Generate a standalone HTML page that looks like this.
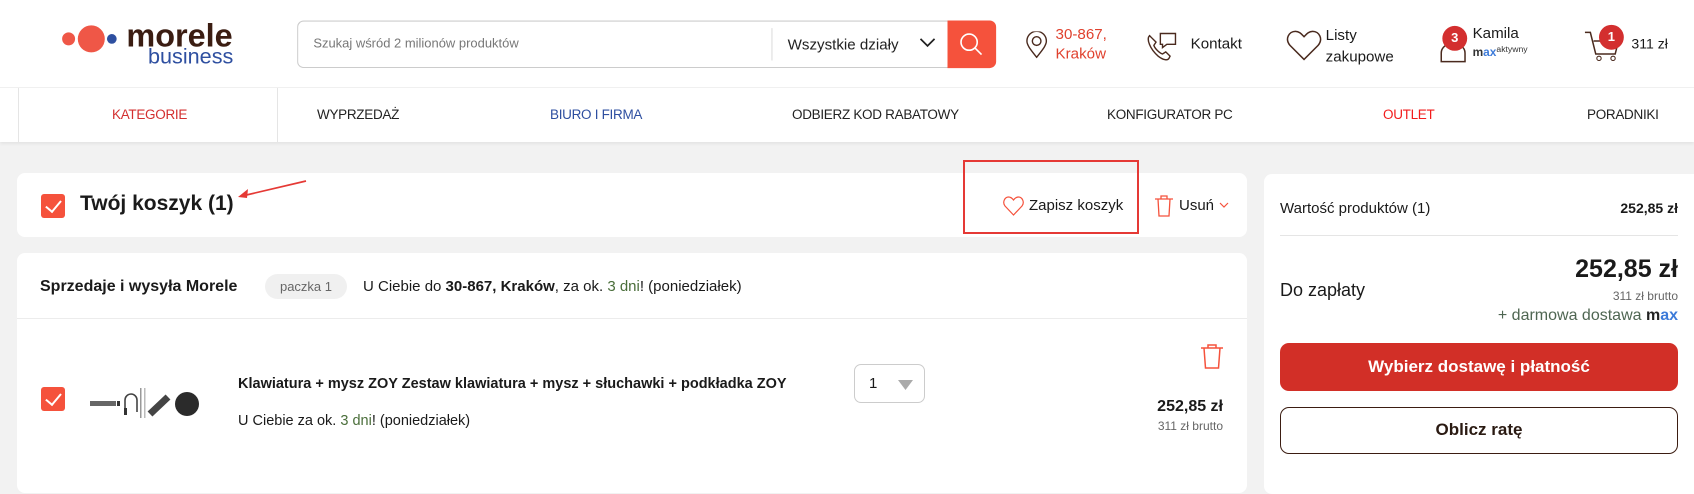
<!DOCTYPE html>
<html><head><meta charset="utf-8"><style>
*{margin:0;padding:0;box-sizing:border-box}
body{width:1694px;height:471px;overflow:hidden;background:#f2f2f2;font-family:"Liberation Sans",sans-serif;color:#1a1a1a;position:relative}
#w{position:absolute;left:0;top:0;width:1568px;height:81.5px;transform:scale(1.0804);transform-origin:0 0}
.a{position:absolute;white-space:nowrap}
.hdr{position:absolute;left:0;top:0;width:1568px;height:81.5px;background:#fff;border-bottom:1px solid #e2e2e2}
.nav{position:absolute;left:0;top:88px;width:1694px;height:54px;background:#fff;box-shadow:0 2px 3px rgba(0,0,0,.06)}
.nav span{position:absolute;top:19px;font-size:13.5px;letter-spacing:-.3px;color:#222}
.card{position:absolute;background:#fff;border-radius:8px}
.cb{position:absolute;width:24px;height:24px;background:#f5523c;border-radius:3px}
.cb:after{content:"";position:absolute;left:8px;top:3px;width:7px;height:13px;border:solid #fff;border-width:0 2px 2px 0;transform:rotate(40deg)}
.badge{position:absolute;width:23px;height:23px;border-radius:50%;background:#d32f2f;color:#fff;font-size:12px;font-weight:bold;text-align:center;line-height:23px}
</style></head><body><div id="w">
<div class="hdr">
 <svg class="a" style="left:50px;top:22px" width="60" height="28"><circle cx="13.5" cy="14" r="6" fill="#ef5747"/><circle cx="34.5" cy="14" r="12.5" fill="#ef5747"/><circle cx="53.5" cy="14" r="4.5" fill="#2e4fa0"/></svg>
 <div class="a" style="left:117px;top:17px;font-size:30px;font-weight:bold;color:#3b1d12">morele</div>
 <div class="a" style="left:137px;top:42px;font-size:20px;color:#2e4fa0">business</div>
 <div class="a" style="left:275px;top:18.5px;width:602px;height:44.5px;border:1px solid #ccc;border-right:none;border-radius:6px 0 0 6px"></div>
 <div class="a" style="left:290px;top:33px;font-size:12px;color:#777">Szukaj wśród 2 milionów produktów</div>
 <div class="a" style="left:714px;top:26px;width:1px;height:30px;background:#ddd"></div>
 <div class="a" style="left:729px;top:33px;font-size:14px;color:#222">Wszystkie działy</div>
 <svg class="a" style="left:851px;top:35px" width="15" height="9"><path d="M1 1l6.5 6.5L14 1" fill="none" stroke="#222" stroke-width="1.6"/></svg>
 <div class="a" style="left:877px;top:18.5px;width:44.5px;height:44.5px;background:#f5523c;border-radius:0 6px 6px 0"></div>
 <svg class="a" style="left:887px;top:29px" width="24" height="24"><circle cx="10" cy="10" r="7.5" fill="none" stroke="#fff" stroke-width="1.5"/><path d="M15.5 15.5l6 6" stroke="#fff" stroke-width="1.5"/></svg>
 <svg class="a" style="left:949px;top:29px" width="21" height="25"><path d="M10.5 24C5 17 1.5 13 1.5 9a9 9 0 0 1 18 0c0 4-3.5 8-9 15z" fill="none" stroke="#4a2a1e" stroke-width="1.3"/><circle cx="10.5" cy="9" r="4" fill="none" stroke="#4a2a1e" stroke-width="1.3"/></svg>
 <div class="a" style="left:977px;top:22px;font-size:14px;line-height:18px;color:#e0412e">30-867,<br>Kraków</div>
 <svg class="a" style="left:1060px;top:25px" width="32" height="32"><path d="M4 8c-3 3 0 12 8 19 5 4 9 4 10 2l1-2-4-4-3 2c-3-1-7-5-8-8l2-3-4-4z" fill="none" stroke="#4a2a1e" stroke-width="1.3"/><path d="M14 6h14v10h-8l-4 3v-3h-2z" fill="none" stroke="#4a2a1e" stroke-width="1.3"/></svg>
 <div class="a" style="left:1102px;top:32px;font-size:14px">Kontakt</div>
 <svg class="a" style="left:1190px;top:27px" width="34" height="30"><path d="M17 28L4 15C-1 9 3 2 9 2c4 0 6 3 8 5 2-2 4-5 8-5 6 0 10 7 5 13z" fill="none" stroke="#4a2a1e" stroke-width="1.4"/></svg>
 <div class="a" style="left:1227px;top:22px;font-size:14px;line-height:20px">Listy<br>zakupowe</div>
 <svg class="a" style="left:1332px;top:37px" width="26" height="22"><path d="M2 20v-8a11 9 0 0 1 22 0v8z" fill="none" stroke="#4a2a1e" stroke-width="1.4"/></svg>
 <div class="badge" style="left:1335px;top:24px">3</div>
 <div class="a" style="left:1363px;top:22px;font-size:14px">Kamila</div>
 <div class="a" style="left:1363px;top:41px;font-size:11px;font-weight:bold;color:#333">m<span style="color:#3d7bd9">ax</span><span style="font-size:8px;font-weight:normal;vertical-align:4px">aktywny</span></div>
 <svg class="a" style="left:1466px;top:27px" width="34" height="32"><path d="M1 3h5l5 20h18l3-12H9" fill="none" stroke="#4a2a1e" stroke-width="1.4"/><circle cx="14" cy="27" r="2" fill="none" stroke="#4a2a1e"/><circle cx="27" cy="27" r="2" fill="none" stroke="#4a2a1e"/></svg>
 <div class="badge" style="left:1480px;top:23px">1</div>
 <div class="a" style="left:1510px;top:33px;font-size:13px">311 zł</div>
</div></div>
<div class="nav">
 <div class="a" style="left:18px;top:0;width:1px;height:54px;background:#e5e5e5"></div>
 <div class="a" style="left:277px;top:0;width:1px;height:54px;background:#e5e5e5"></div>
 <span style="left:112px;color:#d32f2f">KATEGORIE</span>
 <span style="left:317px">WYPRZEDAŻ</span>
 <span style="left:550px;color:#2e4fa0">BIURO I FIRMA</span>
 <span style="left:792px">ODBIERZ KOD RABATOWY</span>
 <span style="left:1107px">KONFIGURATOR PC</span>
 <span style="left:1383px;color:#f21c1c">OUTLET</span>
 <span style="left:1587px">PORADNIKI</span>
</div>

<div class="card" style="left:17px;top:173px;width:1230px;height:64px"></div>
<div class="cb" style="left:41px;top:194px"></div>
<div class="a" style="left:80px;top:192px;font-size:21px;font-weight:bold">Twój koszyk (1)</div>
<svg class="a" style="left:234px;top:178px" width="76" height="24"><path d="M72 3L8 18" stroke="#e53935" stroke-width="1.7"/><path d="M4 19l10-8-1 9z" fill="#e53935"/></svg>
<div class="a" style="left:963px;top:160px;width:176px;height:74px;border:2px solid #e53935"></div>
<svg class="a" style="left:1003px;top:196px" width="21" height="20"><path d="M10.5 19L2 10C-1 6 2 1 5.5 1c2 0 3.5 1 5 3 1.5-2 3-3 5-3C19 1 22 6 19 10z" fill="none" stroke="#f5523c" stroke-width="1.2"/></svg>
<div class="a" style="left:1029px;top:197px;font-size:15px">Zapisz koszyk</div>
<svg class="a" style="left:1154px;top:195px" width="20" height="22"><path d="M1 4h18M7 4V1h6v3M4 4l1 17h10l1-17" fill="none" stroke="#f5523c" stroke-width="1.3"/></svg>
<div class="a" style="left:1179px;top:197px;font-size:15px">Usuń</div>
<svg class="a" style="left:1219px;top:202px" width="10" height="6"><path d="M1 1l4 4 4-4" fill="none" stroke="#f5523c" stroke-width="1.2"/></svg>

<div class="card" style="left:17px;top:253px;width:1230px;height:240px"></div>
<div class="a" style="left:40px;top:278px;font-size:16px;font-weight:bold">Sprzedaje i wysyła Morele</div>
<div class="a" style="left:265px;top:274px;width:82px;height:25px;background:#f0f0f0;border-radius:13px;font-size:13px;color:#666;text-align:center;line-height:25px">paczka 1</div>
<div class="a" style="left:363px;top:278px;font-size:15px">U Ciebie do <b>30-867, Kraków</b>, za ok. <span style="color:#4a6e3a">3 dni</span>! (poniedziałek)</div>
<div class="a" style="left:17px;top:318px;width:1230px;height:1px;background:#ececec"></div>
<div class="cb" style="left:41px;top:387px"></div>
<svg class="a" style="left:90px;top:384px" width="110" height="36"><rect x="0" y="17" width="26" height="5" fill="#666"/><rect x="27" y="17" width="3" height="5" fill="#333"/><path d="M35 28v-12a6 6 0 0 1 12 0v12" fill="none" stroke="#444" stroke-width="1.6"/><rect x="34" y="24" width="3" height="7" fill="#333"/><rect x="50" y="4" width="1.5" height="30" fill="#999"/><rect x="54" y="4" width="1.5" height="30" fill="#bbb"/><path d="M60 30l18-17" stroke="#444" stroke-width="7"/><circle cx="97" cy="20" r="12" fill="#2b2b2b"/></svg>
<div class="a" style="left:238px;top:376px;font-size:14.5px;font-weight:bold">Klawiatura + mysz ZOY Zestaw klawiatura + mysz + słuchawki + podkładka ZOY</div>
<div class="a" style="left:238px;top:413px;font-size:14.5px">U Ciebie za ok. <span style="color:#4a6e3a">3 dni</span>! (poniedziałek)</div>
<div class="a" style="left:854px;top:364px;width:71px;height:39px;border:1px solid #ccc;border-radius:7px"></div>
<div class="a" style="left:869px;top:375px;font-size:15px">1</div>
<svg class="a" style="left:898px;top:380px" width="15" height="10"><path d="M0 0h15L7.5 10z" fill="#aaa"/></svg>
<svg class="a" style="left:1199px;top:343px" width="26" height="26"><path d="M2 5h22M9 5V2h8v3M5 5l1.5 20h13L21 5" fill="none" stroke="#f5523c" stroke-width="1.5"/></svg>
<div class="a" style="right:471px;top:398px;font-size:16px;font-weight:bold">252,85 zł</div>
<div class="a" style="right:471px;top:419px;font-size:12px;color:#666">311 zł brutto</div>

<div class="card" style="left:1264px;top:174px;width:440px;height:320px"></div>
<div class="a" style="left:1280px;top:200px;font-size:15px">Wartość produktów (1)</div>
<div class="a" style="right:16px;top:200px;font-size:14px;font-weight:bold">252,85 zł</div>
<div class="a" style="left:1280px;top:235px;width:398px;height:1px;background:#e5e5e5"></div>
<div class="a" style="left:1280px;top:280px;font-size:18px">Do zapłaty</div>
<div class="a" style="right:16px;top:255px;font-size:25px;font-weight:bold">252,85 zł</div>
<div class="a" style="right:16px;top:289px;font-size:12px;color:#666">311 zł brutto</div>
<div class="a" style="right:16px;top:307px;font-size:16px;color:#4f6652">+ darmowa dostawa <b style="color:#222">m<span style="color:#3d7bd9">ax</span></b></div>
<div class="a" style="left:1280px;top:343px;width:398px;height:48px;background:#d22f27;border-radius:9px;color:#fff;font-size:17px;font-weight:bold;text-align:center;line-height:48px">Wybierz dostawę i płatność</div>
<div class="a" style="left:1280px;top:407px;width:398px;height:47px;border:1.5px solid #3b1d12;border-radius:9px;color:#2a1a12;font-size:17px;font-weight:bold;text-align:center;line-height:44px">Oblicz ratę</div>
</body></html>
